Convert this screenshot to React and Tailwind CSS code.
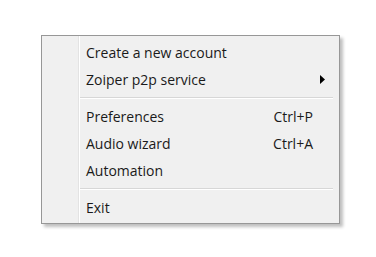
const Item = ({ label, shortcut, submenu }) => (
  <div className="flex items-center h-[27px] pl-[6px] pr-[10px]">
    <span className="flex-1">{label}</span>
    {shortcut && <span className="mr-[16px]">{shortcut}</span>}
    {submenu && (
      <svg width="5" height="9" viewBox="0 0 5 9" className="mr-[4px]">
        <path d="M0 0 L5 4.5 L0 9 Z" fill="#000" />
      </svg>
    )}
  </div>
);

const Separator = () => (
  <div className="py-[4px] pr-[6px]">
    <div className="h-px bg-[#d7d7d7] border-b border-white box-content" />
  </div>
);

export default function App() {
  return (
    <div className="w-[376px] h-[257px] bg-white pt-[35px] pl-[41px]">
      <div
        className="w-[299px] h-[189px] bg-[#f0f0f0] border border-[#979797] flex shadow-[3px_3px_3px_rgba(0,0,0,0.25)] text-[14px] text-[#1a1a1a] font-['Segoe_UI','Open_Sans',sans-serif]"
      >
        <div className="w-[37px] border-r border-[#e3e3e3]" />
        <div className="flex-1 flex flex-col pt-[3px] border-l border-white">
          <Item label="Create a new account" />
          <Item label="Zoiper p2p service" submenu />
          <Separator />
          <Item label="Preferences" shortcut="Ctrl+P" />
          <Item label="Audio wizard" shortcut="Ctrl+A" />
          <Item label="Automation" />
          <Separator />
          <Item label="Exit" />
        </div>
      </div>
    </div>
  );
}
